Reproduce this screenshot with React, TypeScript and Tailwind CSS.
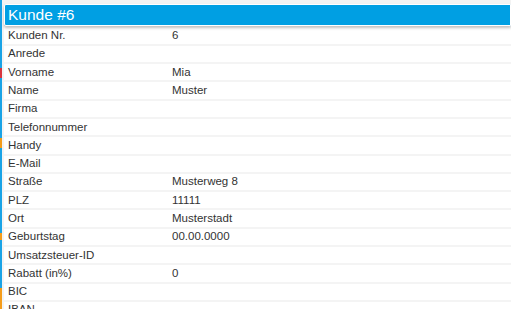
import React from 'react';

const rows: [string, string][] = [
  ['Kunden Nr.', '6'],
  ['Anrede', ''],
  ['Vorname', 'Mia'],
  ['Name', 'Muster'],
  ['Firma', ''],
  ['Telefonnummer', ''],
  ['Handy', ''],
  ['E-Mail', ''],
  ['Straße', 'Musterweg 8'],
  ['PLZ', '11111'],
  ['Ort', 'Musterstadt'],
  ['Geburtstag', '00.00.0000'],
  ['Umsatzsteuer-ID', ''],
  ['Rabatt (in%)', '0'],
  ['BIC', ''],
  ['IBAN', ''],
];

export default function App() {
  return (
    <div className="w-[511px] h-[309px] overflow-hidden flex bg-[#f3f3f3] font-['Liberation_Sans',Arial,sans-serif]">
      {/* side strip */}
      <div className="w-[2px] flex flex-col shrink-0">
        <div className="h-[68px] bg-[#1aa3e6]" />
        <div className="h-[10px] bg-[#d9363e]" />
        <div className="h-[60px] bg-[#1aa3e6]" />
        <div className="h-[10px] bg-[#f59c1a]" />
        <div className="h-[85px] bg-[#1aa3e6]" />
        <div className="h-[7px] bg-[#f59c1a]" />
        <div className="h-[48px] bg-[#1aa3e6]" />
        <div className="flex-1 bg-[#f59c1a]" />
      </div>
      <div className="flex-1 ml-[2px] flex flex-col">
        <div className="h-[4px] shrink-0" />
        <div className="h-[22px] shrink-0 bg-[#009fe3] border border-white rounded-l-[2px] shadow-[0_2px_3px_rgba(0,0,0,0.25)] flex items-center pl-[3px] text-white text-[15.5px] relative z-10">
          Kunde #6
        </div>
        <div className="flex-1 bg-white pt-[1.5px]">
          {rows.map(([label, value]) => (
            <div
              key={label}
              className="h-[18.3px] flex items-center border-b-[2px] border-[#f4f4f4] text-[11.5px] text-[#333] box-border"
            >
              <span className="w-[168px] pl-[4px] shrink-0">{label}</span>
              <span>{value}</span>
            </div>
          ))}
        </div>
      </div>
    </div>
  );
}
